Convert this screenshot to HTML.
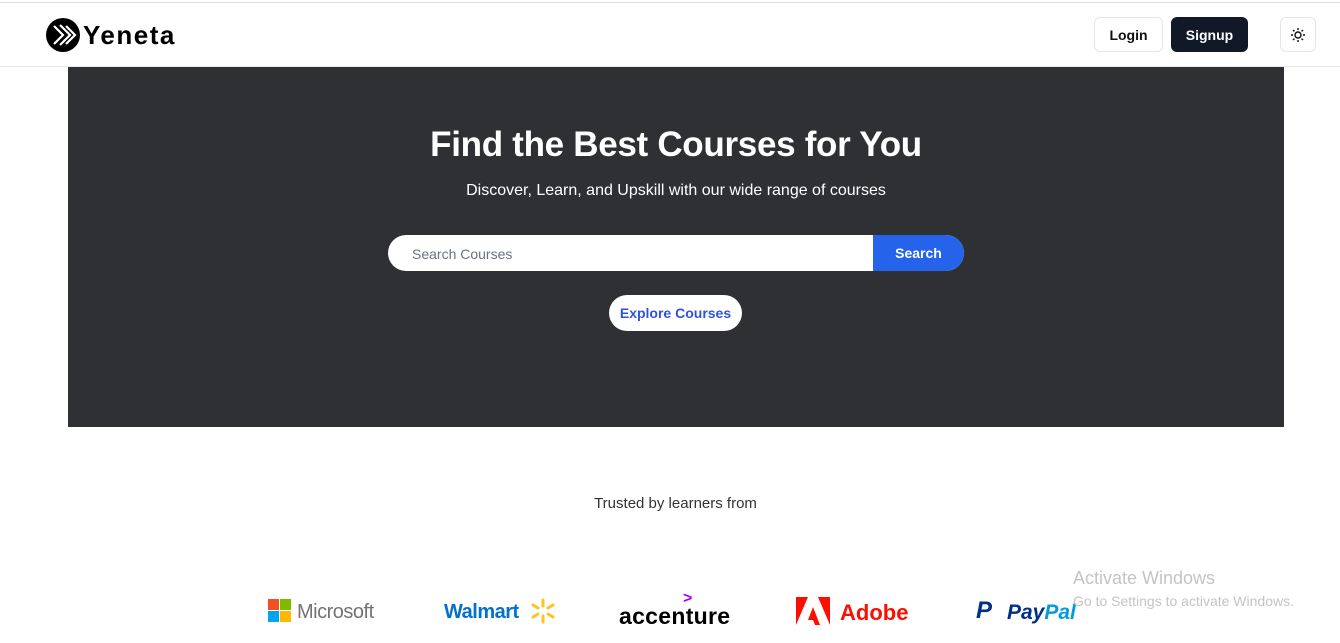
<!DOCTYPE html>
<html><head><meta charset="utf-8"><style>
*{margin:0;padding:0;box-sizing:border-box}
body{width:1340px;height:643px;overflow:hidden;background:#fff;font-family:"Liberation Sans",sans-serif;position:relative}
.top{position:absolute;left:0;top:2px;width:1340px;height:1px;background:#ddd}
.hdr{position:absolute;left:0;top:66px;width:1340px;height:1px;background:#e5e7eb}
.abs{position:absolute}
.btn{position:absolute;border-radius:6px;font-weight:bold;font-size:14px;display:flex;align-items:center;justify-content:center}
.hero{position:absolute;left:68px;top:67px;width:1216px;height:360px;background:#2f3033}
</style></head><body>
<div class="top"></div>
<svg class="abs" style="left:45px;top:17px" width="36" height="36" viewBox="0 0 36 36"><circle cx="18" cy="18" r="17" fill="#000"/><path d="M9 9 L18 18 L9 27 M15 8 L25 18 L15 28 M21 9 L30 18 L21 27" stroke="#fff" stroke-width="2.2" fill="none"/></svg>
<div class="abs" style="left:83px;top:20px;font-size:26px;font-weight:bold;color:#000;letter-spacing:1.5px">Yeneta</div>
<div class="btn" style="left:1094px;top:17px;width:69px;height:35px;border:1px solid #e2e5ea;color:#111">Login</div>
<div class="btn" style="left:1171px;top:17px;width:77px;height:35px;background:#111827;color:#fff">Signup</div>
<div class="btn" style="left:1280px;top:17px;width:36px;height:35px;border:1px solid #e2e5ea">
<svg width="16" height="16" viewBox="0 0 16 16"><circle cx="8" cy="8" r="3" fill="none" stroke="#111" stroke-width="1.4"/><g stroke="#111" stroke-width="1.4"><path d="M8 1v2M8 13v2M1 8h2M13 8h2M3 3l1.4 1.4M11.6 11.6L13 13M3 13l1.4-1.4M11.6 4.4L13 3"/></g></svg></div>
<div class="hdr"></div>
<div class="hero">
<div class="abs" style="left:0;width:1216px;top:58px;text-align:center;color:#fff;font-size:35px;font-weight:bold;letter-spacing:-0.3px">Find the Best Courses for You</div>
<div class="abs" style="left:0;width:1216px;top:115px;text-align:center;color:#fff;font-size:16px">Discover, Learn, and Upskill with our wide range of courses</div>
<div class="abs" style="left:320px;top:168px;width:576px;height:36px;background:#fff;border-radius:18px;overflow:hidden">
<div class="abs" style="left:24px;top:11px;font-size:14px;color:#6b7280">Search Courses</div>
<div class="abs" style="left:485px;top:0;width:91px;height:36px;background:#2563eb;color:#fff;font-weight:bold;font-size:14px;display:flex;align-items:center;justify-content:center">Search</div>
</div>
<div class="abs" style="left:541px;top:228px;width:133px;height:36px;background:#fff;border-radius:18px;color:#2f55d4;font-weight:bold;font-size:14px;display:flex;align-items:center;justify-content:center">Explore Courses</div>
</div>
<div class="abs" style="left:0;width:1351px;top:495px;text-align:center;font-size:15px;color:#333">Trusted by learners from</div>
<svg class="abs" style="left:268px;top:599px" width="24" height="24"><rect width="11" height="11" fill="#f25022"/><rect x="12" width="11" height="11" fill="#7fba00"/><rect y="12" width="11" height="11" fill="#00a4ef"/><rect x="12" y="12" width="11" height="11" fill="#ffb900"/></svg>
<div class="abs" style="left:297px;top:601px;font-size:20px;color:#737373;letter-spacing:-0.5px">Microsoft</div>
<div class="abs" style="left:444px;top:601px;font-size:20px;color:#0071ce;font-weight:bold;letter-spacing:-0.5px">Walmart</div>
<svg class="abs" style="left:530px;top:598px" width="26" height="26" viewBox="0 0 26 26"><g stroke="#ffc220" stroke-width="3" stroke-linecap="round"><path d="M13 2v6M13 18v6M3 7l5 3M18 16l5 3M3 19l5-3M18 10l5-3"/></g></svg>
<div class="abs" style="left:619px;top:603px;font-size:23px;color:#000;font-weight:bold;letter-spacing:0.3px">accenture</div>
<div class="abs" style="left:683px;top:590px;font-size:16px;color:#a100ff;font-weight:bold">&gt;</div>
<svg class="abs" style="left:796px;top:597px" width="34" height="28" viewBox="0 0 34 28"><path d="M0 0h12L0 28z M22 0h12v28z M17 10l7 18h-5l-2-5h-5z" fill="#fa0f00"/></svg>
<div class="abs" style="left:840px;top:600px;font-size:22px;color:#fa0f00;font-weight:bold">Adobe</div>
<div class="abs" style="left:976px;top:597px;font-size:24px;color:#003087;font-weight:bold;font-style:italic">P</div>
<div class="abs" style="left:1007px;top:601px;font-size:21px;color:#003087;font-weight:bold;font-style:italic">Pay<span style="color:#009cde">Pal</span></div>
<div class="abs" style="left:1073px;top:568px;font-size:18px;color:#c4c4c4">Activate Windows</div>
<div class="abs" style="left:1073px;top:593px;font-size:14px;color:#c4c4c4">Go to Settings to activate Windows.</div>
</body></html>
